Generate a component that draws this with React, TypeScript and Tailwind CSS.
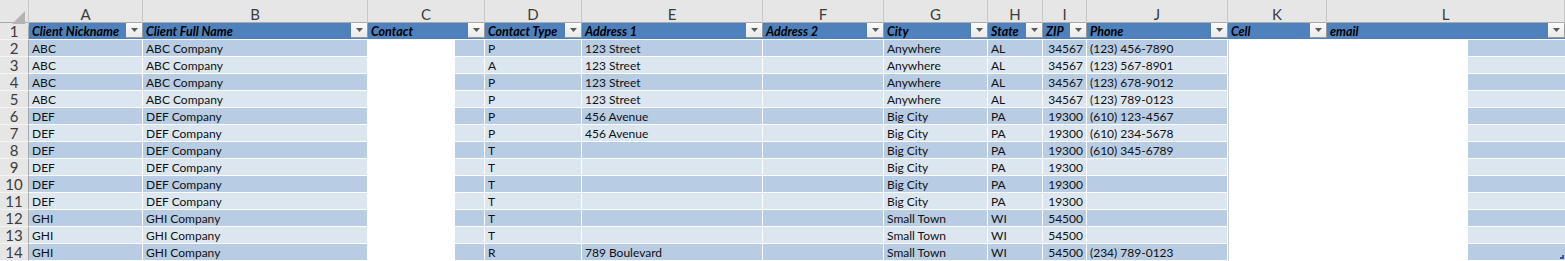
import React from 'react'

const grid =
  'grid grid-cols-[29px_114px_225px_117px_97px_181px_121px_104px_55px_44px_141px_99px_238px]'

const letters = ['A', 'B', 'C', 'D', 'E', 'F', 'G', 'H', 'I', 'J', 'K', 'L']

const headers = [
  'Client Nickname',
  'Client Full Name',
  'Contact',
  'Contact Type',
  'Address 1',
  'Address 2',
  'City',
  'State',
  'ZIP',
  'Phone',
  'Cell',
  'email',
]

// nickname, full name, type, address 1, city, state, zip, phone
const rows: string[][] = [
  ['ABC', 'ABC Company', 'P', '123 Street', 'Anywhere', 'AL', '34567', '(123) 456-7890'],
  ['ABC', 'ABC Company', 'A', '123 Street', 'Anywhere', 'AL', '34567', '(123) 567-8901'],
  ['ABC', 'ABC Company', 'P', '123 Street', 'Anywhere', 'AL', '34567', '(123) 678-9012'],
  ['ABC', 'ABC Company', 'P', '123 Street', 'Anywhere', 'AL', '34567', '(123) 789-0123'],
  ['DEF', 'DEF Company', 'P', '456 Avenue', 'Big City', 'PA', '19300', '(610) 123-4567'],
  ['DEF', 'DEF Company', 'P', '456 Avenue', 'Big City', 'PA', '19300', '(610) 234-5678'],
  ['DEF', 'DEF Company', 'T', '', 'Big City', 'PA', '19300', '(610) 345-6789'],
  ['DEF', 'DEF Company', 'T', '', 'Big City', 'PA', '19300', ''],
  ['DEF', 'DEF Company', 'T', '', 'Big City', 'PA', '19300', ''],
  ['DEF', 'DEF Company', 'T', '', 'Big City', 'PA', '19300', ''],
  ['GHI', 'GHI Company', 'T', '', 'Small Town', 'WI', '54500', ''],
  ['GHI', 'GHI Company', 'T', '', 'Small Town', 'WI', '54500', ''],
  ['GHI', 'GHI Company', 'R', '789 Boulevard', 'Small Town', 'WI', '54500', '(234) 789-0123'],
]

function FilterButton() {
  return (
    <div className="absolute right-0 top-0 flex h-[15px] w-[17px] items-center justify-center border-r border-b border-[#9a9a9a] bg-gradient-to-b from-[#fbfbfb] to-[#e9e9e9]">
      <svg width="7" height="4" viewBox="0 0 7 4">
        <polygon points="0,0 7,0 3.5,4" fill="#5a5a5a" />
      </svg>
    </div>
  )
}

function RowNum({ n }: { n: number }) {
  return (
    <div className="flex items-center justify-center border-r border-b border-r-[#a8a8a8] border-b-[#f4f4f4] bg-[#e6e6e6] pt-[1px] text-[15px] leading-none text-[#3c3c3c]">
      {n}
    </div>
  )
}

function Cell({ text, band, right }: { text?: string; band: string; right?: boolean }) {
  return (
    <div
      className={`overflow-hidden whitespace-nowrap border-r border-b border-white px-[3px] pt-[1px] text-[12px] leading-[15px] text-[#111] ${band} ${
        right ? 'text-right' : ''
      }`}
    >
      {text}
    </div>
  )
}

export default function App() {
  return (
    <div className="relative h-[261px] w-[1565px] overflow-hidden bg-white font-['Lato',sans-serif]">
      {/* Column letters */}
      <div className={`${grid} h-[23px] border-b border-[#ababab] bg-[#e6e6e6]`}>
        <div className="relative border-r border-[#c8c8c8]">
          <svg className="absolute right-[3px] bottom-[2px]" width="13" height="13" viewBox="0 0 13 13">
            <polygon points="13,0 13,13 0,13" fill="#b4b4b4" />
          </svg>
        </div>
        {letters.map((l) => (
          <div
            key={l}
            className="flex items-center justify-center border-r border-[#c8c8c8] pt-[3px] text-[15px] text-[#3c3c3c]"
          >
            {l}
          </div>
        ))}
      </div>

      {/* Table header row */}
      <div className={`${grid} h-[17px]`}>
        <RowNum n={1} />
        {headers.map((h) => (
          <div
            key={h}
            className="relative overflow-hidden whitespace-nowrap border-b border-white bg-[#4f81bd] px-[3px] pt-[1px] text-[12.5px] font-bold italic leading-[15px] text-black"
          >
            {h}
            <FilterButton />
          </div>
        ))}
      </div>

      {/* Data rows */}
      {rows.map((r, i) => {
        const band = i % 2 === 0 ? 'bg-[#b8cce4]' : 'bg-[#dce6f1]'
        return (
          <div key={i} className={`${grid} h-[17px]`}>
            <RowNum n={i + 2} />
            <Cell text={r[0]} band={band} />
            <Cell text={r[1]} band={band} />
            <div className="flex border-b border-white">
              <div className="w-[87px] bg-white" />
              <div className={`flex-1 border-r border-white ${band}`} />
            </div>
            <Cell text={r[2]} band={band} />
            <Cell text={r[3]} band={band} />
            <Cell band={band} />
            <Cell text={r[4]} band={band} />
            <Cell text={r[5]} band={band} />
            <Cell text={r[6]} band={band} right />
            <Cell text={r[7]} band={band} />
            <div className="border-l border-[#c9d4e2] bg-white" />
            <div className="flex border-b border-white">
              <div className="w-[141px] bg-white" />
              <div className={`flex-1 ${band}`} />
            </div>
          </div>
        )
      })}

      {/* table resize handle */}
      <div className="absolute right-[1px] bottom-[2px] h-[4px] w-[4px] bg-[#3b55a8] [clip-path:polygon(100%_0,100%_100%,0_100%,0_50%,50%_50%,50%_0)]" />
    </div>
  )
}
